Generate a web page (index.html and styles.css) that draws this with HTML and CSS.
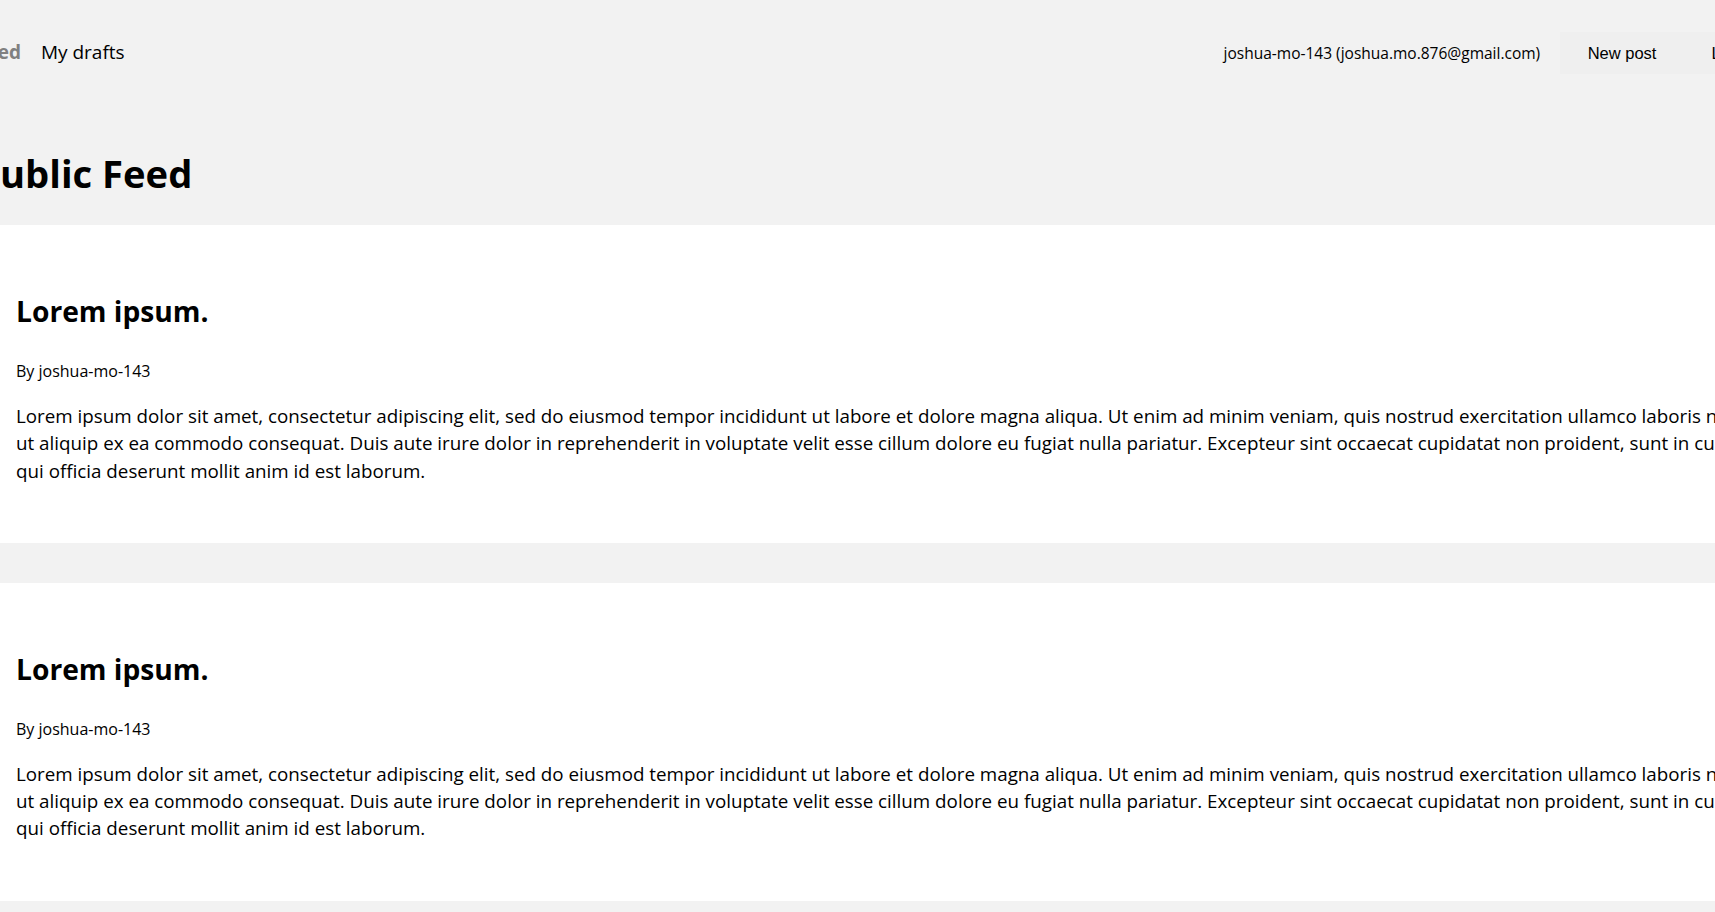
FILE: index.html
```html
<!DOCTYPE html>
<html lang="en">
<head>
<meta charset="utf-8">
<title>Public Feed</title>
<link rel="stylesheet" href="styles.css">
</head>
<body>
<div class="page">
  <nav class="nav">
    <div class="nav-left">
      <a class="nav-link active" href="#">Feed</a>
      <a class="nav-link" href="#">My drafts</a>
    </div>
    <div class="nav-right">
      <p class="user">joshua-mo-143 (joshua.mo.876@gmail.com)</p>
      <button class="btn" type="button"><span class="btn-label">New post</span></button>
      <button class="btn" type="button"><span class="btn-label">Log out</span></button>
    </div>
  </nav>
  <div class="layout">
    <main>
      <h1 class="feed-title">Public Feed</h1>
      <div class="posts">
        <article class="post">
          <h2 class="post-title">Lorem ipsum.</h2>
          <p class="post-author">By joshua-mo-143</p>
          <p class="post-body">Lorem ipsum dolor sit amet, consectetur adipiscing elit, sed do eiusmod tempor incididunt ut labore et dolore magna aliqua. Ut enim ad minim veniam, quis nostrud exercitation ullamco laboris nisi ut aliquip ex ea commodo consequat. Duis aute irure dolor in reprehenderit in voluptate velit esse cillum dolore eu fugiat nulla pariatur. Excepteur sint occaecat cupidatat non proident, sunt in culpa qui officia deserunt mollit anim id est laborum.</p>
        </article>
        <article class="post">
          <h2 class="post-title">Lorem ipsum.</h2>
          <p class="post-author">By joshua-mo-143</p>
          <p class="post-body">Lorem ipsum dolor sit amet, consectetur adipiscing elit, sed do eiusmod tempor incididunt ut labore et dolore magna aliqua. Ut enim ad minim veniam, quis nostrud exercitation ullamco laboris nisi ut aliquip ex ea commodo consequat. Duis aute irure dolor in reprehenderit in voluptate velit esse cillum dolore eu fugiat nulla pariatur. Excepteur sint occaecat cupidatat non proident, sunt in culpa qui officia deserunt mollit anim id est laborum.</p>
        </article>
        <article class="post">
          <h2 class="post-title">Lorem ipsum.</h2>
          <p class="post-author">By joshua-mo-143</p>
          <p class="post-body">Lorem ipsum dolor sit amet, consectetur adipiscing elit, sed do eiusmod tempor incididunt ut labore et dolore magna aliqua. Ut enim ad minim veniam, quis nostrud exercitation ullamco laboris nisi ut aliquip ex ea commodo consequat. Duis aute irure dolor in reprehenderit in voluptate velit esse cillum dolore eu fugiat nulla pariatur. Excepteur sint occaecat cupidatat non proident, sunt in culpa qui officia deserunt mollit anim id est laborum.</p>
        </article>
      </div>
    </main>
  </div>
</div>
</body>
</html>
```

FILE: styles.css
```css
html,
body {
  margin: 0;
  padding: 0;
}

body {
  background: #f2f2f2;
  color: #000;
  font-family: "Open Sans", "Noto Sans", sans-serif;
  font-size: 18.8px;
  overflow: hidden;
}

/* the page is wider than the window and scrolled a little to the right */
.page {
  width: 1898px;
  margin-left: -64px;
}

.nav {
  display: flex;
  align-items: center;
  padding: 32px 40px 0;
}

.nav-left {
  display: flex;
  align-items: center;
  gap: 20px;
  margin-top: -2px;
}

.nav-link {
  color: #000;
  text-decoration: none;
  font-size: 19px;
}

.nav-link.active {
  color: #808080;
  font-weight: 700;
}

.nav-right {
  margin-left: auto;
  display: flex;
  align-items: center;
}

.user {
  margin: -1px 0 0;
  padding-right: 20px;
  font-size: 15.5px;
}

.btn {
  margin: 0;
  padding: 1px 7.5px;
  border: 0;
  background: #efefef;
  color: #000;
  font-family: "Liberation Sans", Arial, sans-serif;
  font-size: 16.5px;
}

.btn-label {
  display: inline-block;
  padding: 10px 20px;
  line-height: 20px;
}

.layout {
  padding: 0 40px;
}

.feed-title {
  margin: 76px 0 29px;
  font-size: 38.2px;
  line-height: 46px;
  font-weight: 700;
}

.posts {
  display: flex;
  flex-direction: column;
  gap: 40px;
}

.post {
  background: #fff;
  padding: 40px;
}

.post-title {
  margin: 28px 0 31px;
  font-size: 28.2px;
  line-height: 36px;
  font-weight: 700;
}

.post-author {
  margin: 0;
  font-size: 16px;
  line-height: 22px;
}

.post-body {
  max-width: 1739px;
  margin: 21px 0 18px;
  font-size: 18.8px;
  line-height: 27.3px;
}
```
